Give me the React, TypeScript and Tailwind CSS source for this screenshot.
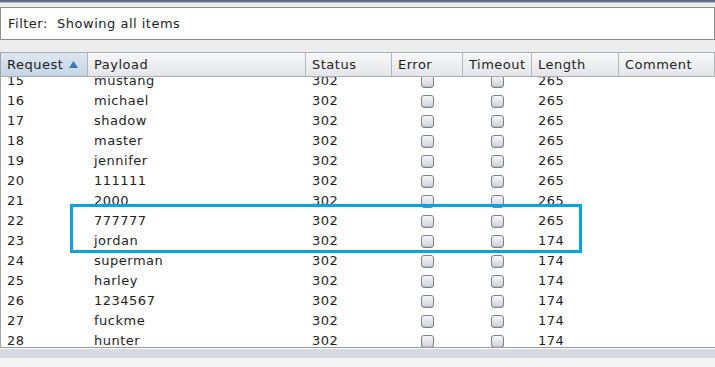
const columns = [
  { name: "Request", w: "w-[87px]" },
  { name: "Payload", w: "w-[218px]" },
  { name: "Status", w: "w-[86px]" },
  { name: "Error", w: "w-[71px]" },
  { name: "Timeout", w: "w-[69px]" },
  { name: "Length", w: "w-[87px]" },
  { name: "Comment", w: "flex-1" },
];

const rows: [number, string, number, number][] = [
  [15, "mustang", 302, 265],
  [16, "michael", 302, 265],
  [17, "shadow", 302, 265],
  [18, "master", 302, 265],
  [19, "jennifer", 302, 265],
  [20, "111111", 302, 265],
  [21, "2000", 302, 265],
  [22, "777777", 302, 265],
  [23, "jordan", 302, 174],
  [24, "superman", 302, 174],
  [25, "harley", 302, 174],
  [26, "1234567", 302, 174],
  [27, "fuckme", 302, 174],
  [28, "hunter", 302, 174],
];

const Check = () => (
  <div className="w-[13px] h-[13px] rounded-[3px] border border-[#7c8088] bg-gradient-to-b from-[#f4f5f7] to-[#cfd2d8] shadow-[inset_0_-1px_0_#b9bcc2]" />
);

const App = () => {
  return (
    <div className="relative w-[715px] h-[367px] overflow-hidden bg-[#ededed] flex flex-col font-['DejaVu_Sans',sans-serif] text-[13px] tracking-[0.5px] text-[#1e1e1e]">
      <div className="h-[2px] bg-[#5d6c80] shrink-0" />
      <div className="h-[1px] bg-[#b4bcc7] shrink-0" />

      <div className="pt-[4px] shrink-0">
        <div className="h-[33px] bg-white border border-[#8e8e8e] flex items-center pl-[7px] pt-[1px]">
          <span>Filter:&nbsp; Showing all items</span>
        </div>
      </div>

      <div className="h-[12px] shrink-0" />

      <div className="flex flex-col border-l border-[#a4a4a4] bg-white shrink-0">
        <div className="h-[25px] flex border-t border-b border-[#a9adb3] bg-gradient-to-b from-[#f7f8f9] to-[#e3e5e9]">
          {columns.map((c, i) => (
            <div
              key={c.name}
              className={`${c.w} flex items-center px-[6px] pt-[1px] border-r border-[#b3b6bb] ${
                i === 0 ? "bg-gradient-to-b from-[#dde7f1] to-[#c5d4e4] justify-between" : ""
              }`}
            >
              <span>{c.name}</span>
              {i === 0 && (
                <svg width="9" height="7" viewBox="0 0 9 7" className="mr-[3px] mb-[1px]">
                  <path d="M0 7 L4.5 0 L9 7 Z" fill="#3b78b6" />
                </svg>
              )}
            </div>
          ))}
        </div>

        <div className="h-[270px] overflow-hidden">
          <div className="-mt-[6px]">
            {rows.map(([n, p, s, l]) => (
              <div key={n} className="h-[20px] flex items-center">
                <div className="w-[87px] px-[6px]">{n}</div>
                <div className="w-[218px] px-[6px]">{p}</div>
                <div className="w-[86px] px-[6px]">{s}</div>
                <div className="w-[71px] flex justify-center">
                  <Check />
                </div>
                <div className="w-[69px] flex justify-center">
                  <Check />
                </div>
                <div className="w-[87px] px-[6px]">{l}</div>
                <div className="flex-1" />
              </div>
            ))}
          </div>
        </div>
      </div>

      <div className="h-[1px] bg-[#9b9b9b] shrink-0" />
      <div className="h-[1px] bg-white shrink-0" />
      <div className="h-[9px] bg-[#d7dae0] shrink-0 flex justify-center">
        <div className="ml-[803px] w-[24px] h-[4px] mt-[1px] border-t border-[#a9adb5] bg-[#eef0f3]" />
      </div>
      <div className="flex-1 bg-[#f4f4f4]" />

      <div className="absolute left-[70px] top-[204px] w-[512px] h-[49px] border-[3px] border-[#0aa2e6]" />
    </div>
  );
};

export default App;
